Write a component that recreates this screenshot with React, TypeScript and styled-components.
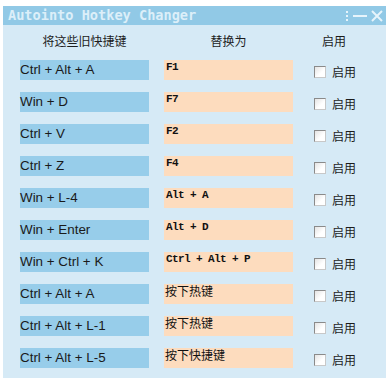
import React from "react";
import styled, { createGlobalStyle } from "styled-components";

const Global = createGlobalStyle`
  html, body { margin: 0; padding: 0; background: #ffffff; }
  body { font-family: "Liberation Sans", Arial, "Noto Sans CJK SC", sans-serif; }
`;

const Window = styled.div`
  margin: 6px 0 0 3px;
  width: 383px;
  display: flex;
  flex-direction: column;
`;

const TitleBar = styled.div`
  height: 19px;
  background: #91c9e6;
  display: flex;
  align-items: center;
  padding: 0 3px 0 5px;
`;

const Title = styled.div`
  flex: 1;
  font-family: "DejaVu Sans Mono", "Liberation Mono", monospace;
  font-weight: bold;
  font-size: 13.6px;
  color: #dceff9;
  line-height: 19px;
`;

const Controls = styled.div`
  display: flex;
  align-items: center;
  gap: 4px;
`;

const Body = styled.div`
  background: #d6eaf6;
  padding: 0 0 10px 17px;
  display: flex;
  flex-direction: column;
  gap: 12px;
`;

const Grid = styled.div`
  display: grid;
  grid-template-columns: 129px 129px auto;
  column-gap: 15px;
  align-items: start;
`;

const Header = styled(Grid)`
  height: 23px;
  padding-top: 9px;
  margin-bottom: -9px;
`;

const HeadCell = styled.div<{ $align?: string }>`
  font-family: "Noto Sans CJK SC", sans-serif;
  font-size: 12px;
  line-height: 14px;
  color: #1c1c1c;
  text-align: ${(p) => p.$align || "center"};
  padding-left: ${(p) => (p.$align === "left" ? "14px" : "0")};
`;

const OldKey = styled.div`
  height: 20px;
  background: #97cdea;
  font-family: "Liberation Sans", Arial, sans-serif;
  font-size: 13.4px;
  line-height: 19px;
  color: #1a1a1a;
  white-space: nowrap;
`;

const NewKey = styled.div<{ $cjk?: boolean }>`
  height: 20px;
  box-sizing: border-box;
  background: #fddcbe;
  font-family: ${(p) =>
    p.$cjk ? `"Noto Sans CJK SC", sans-serif` : `"Liberation Mono", monospace`};
  font-weight: ${(p) => (p.$cjk ? "normal" : "bold")};
  font-size: ${(p) => (p.$cjk ? "12px" : "11px")};
  letter-spacing: ${(p) => (p.$cjk ? "0" : "-0.6px")};
  line-height: ${(p) => (p.$cjk ? "13px" : "11px")};
  padding: ${(p) => (p.$cjk ? "0 0 0 1px" : "2px 0 0 2px")};
  color: #111111;
  white-space: pre;
`;

const Enable = styled.label`
  display: flex;
  align-items: center;
  gap: 6px;
  margin-left: 6px;
  margin-top: 6px;
  font-family: "Noto Sans CJK SC", sans-serif;
  font-size: 12px;
  line-height: 12px;
  color: #1c1c1c;
`;

const Box = styled.span`
  width: 10px;
  height: 10px;
  border: 1px solid #8a8a8a;
  border-right-color: #c8c8c8;
  border-bottom-color: #c8c8c8;
  background: linear-gradient(135deg, #e4e4e4 0%, #ffffff 60%, #ffffff 100%);
`;

const rows: { old: string; neu: string; cjk?: boolean }[] = [
  { old: "Ctrl + Alt + A", neu: "F1" },
  { old: "Win + D", neu: "F7" },
  { old: "Ctrl + V", neu: "F2" },
  { old: "Ctrl + Z", neu: "F4" },
  { old: "Win + L-4", neu: "Alt + A" },
  { old: "Win + Enter", neu: "Alt + D" },
  { old: "Win + Ctrl + K", neu: "Ctrl + Alt + P" },
  { old: "Ctrl + Alt + A", neu: "按下热键", cjk: true },
  { old: "Ctrl + Alt + L-1", neu: "按下热键", cjk: true },
  { old: "Ctrl + Alt + L-5", neu: "按下快捷键", cjk: true },
];

export default function App() {
  return (
    <>
      <Global />
      <Window>
        <TitleBar>
          <Title>Autointo Hotkey Changer</Title>
          <Controls>
            <svg width="4" height="12" viewBox="0 0 4 12">
              <rect x="1" y="1" width="2" height="2" fill="#e6f4fb" />
              <rect x="1" y="5" width="2" height="2" fill="#e6f4fb" />
              <rect x="1" y="9" width="2" height="2" fill="#e6f4fb" />
            </svg>
            <svg width="14" height="12" viewBox="0 0 14 12">
              <rect x="0" y="5" width="14" height="2" fill="#e6f4fb" />
            </svg>
            <svg width="12" height="12" viewBox="0 0 12 12">
              <path d="M1 1 L11 11 M11 1 L1 11" stroke="#e6f4fb" strokeWidth="2" />
            </svg>
          </Controls>
        </TitleBar>
        <Body>
          <Header>
            <HeadCell>将这些旧快捷键</HeadCell>
            <HeadCell>替换为</HeadCell>
            <HeadCell $align="left">启用</HeadCell>
          </Header>
          {rows.map((r, i) => (
            <Grid key={i}>
              <OldKey>{r.old}</OldKey>
              <NewKey $cjk={r.cjk}>{r.neu}</NewKey>
              <Enable>
                <Box />
                启用
              </Enable>
            </Grid>
          ))}
        </Body>
      </Window>
    </>
  );
}
